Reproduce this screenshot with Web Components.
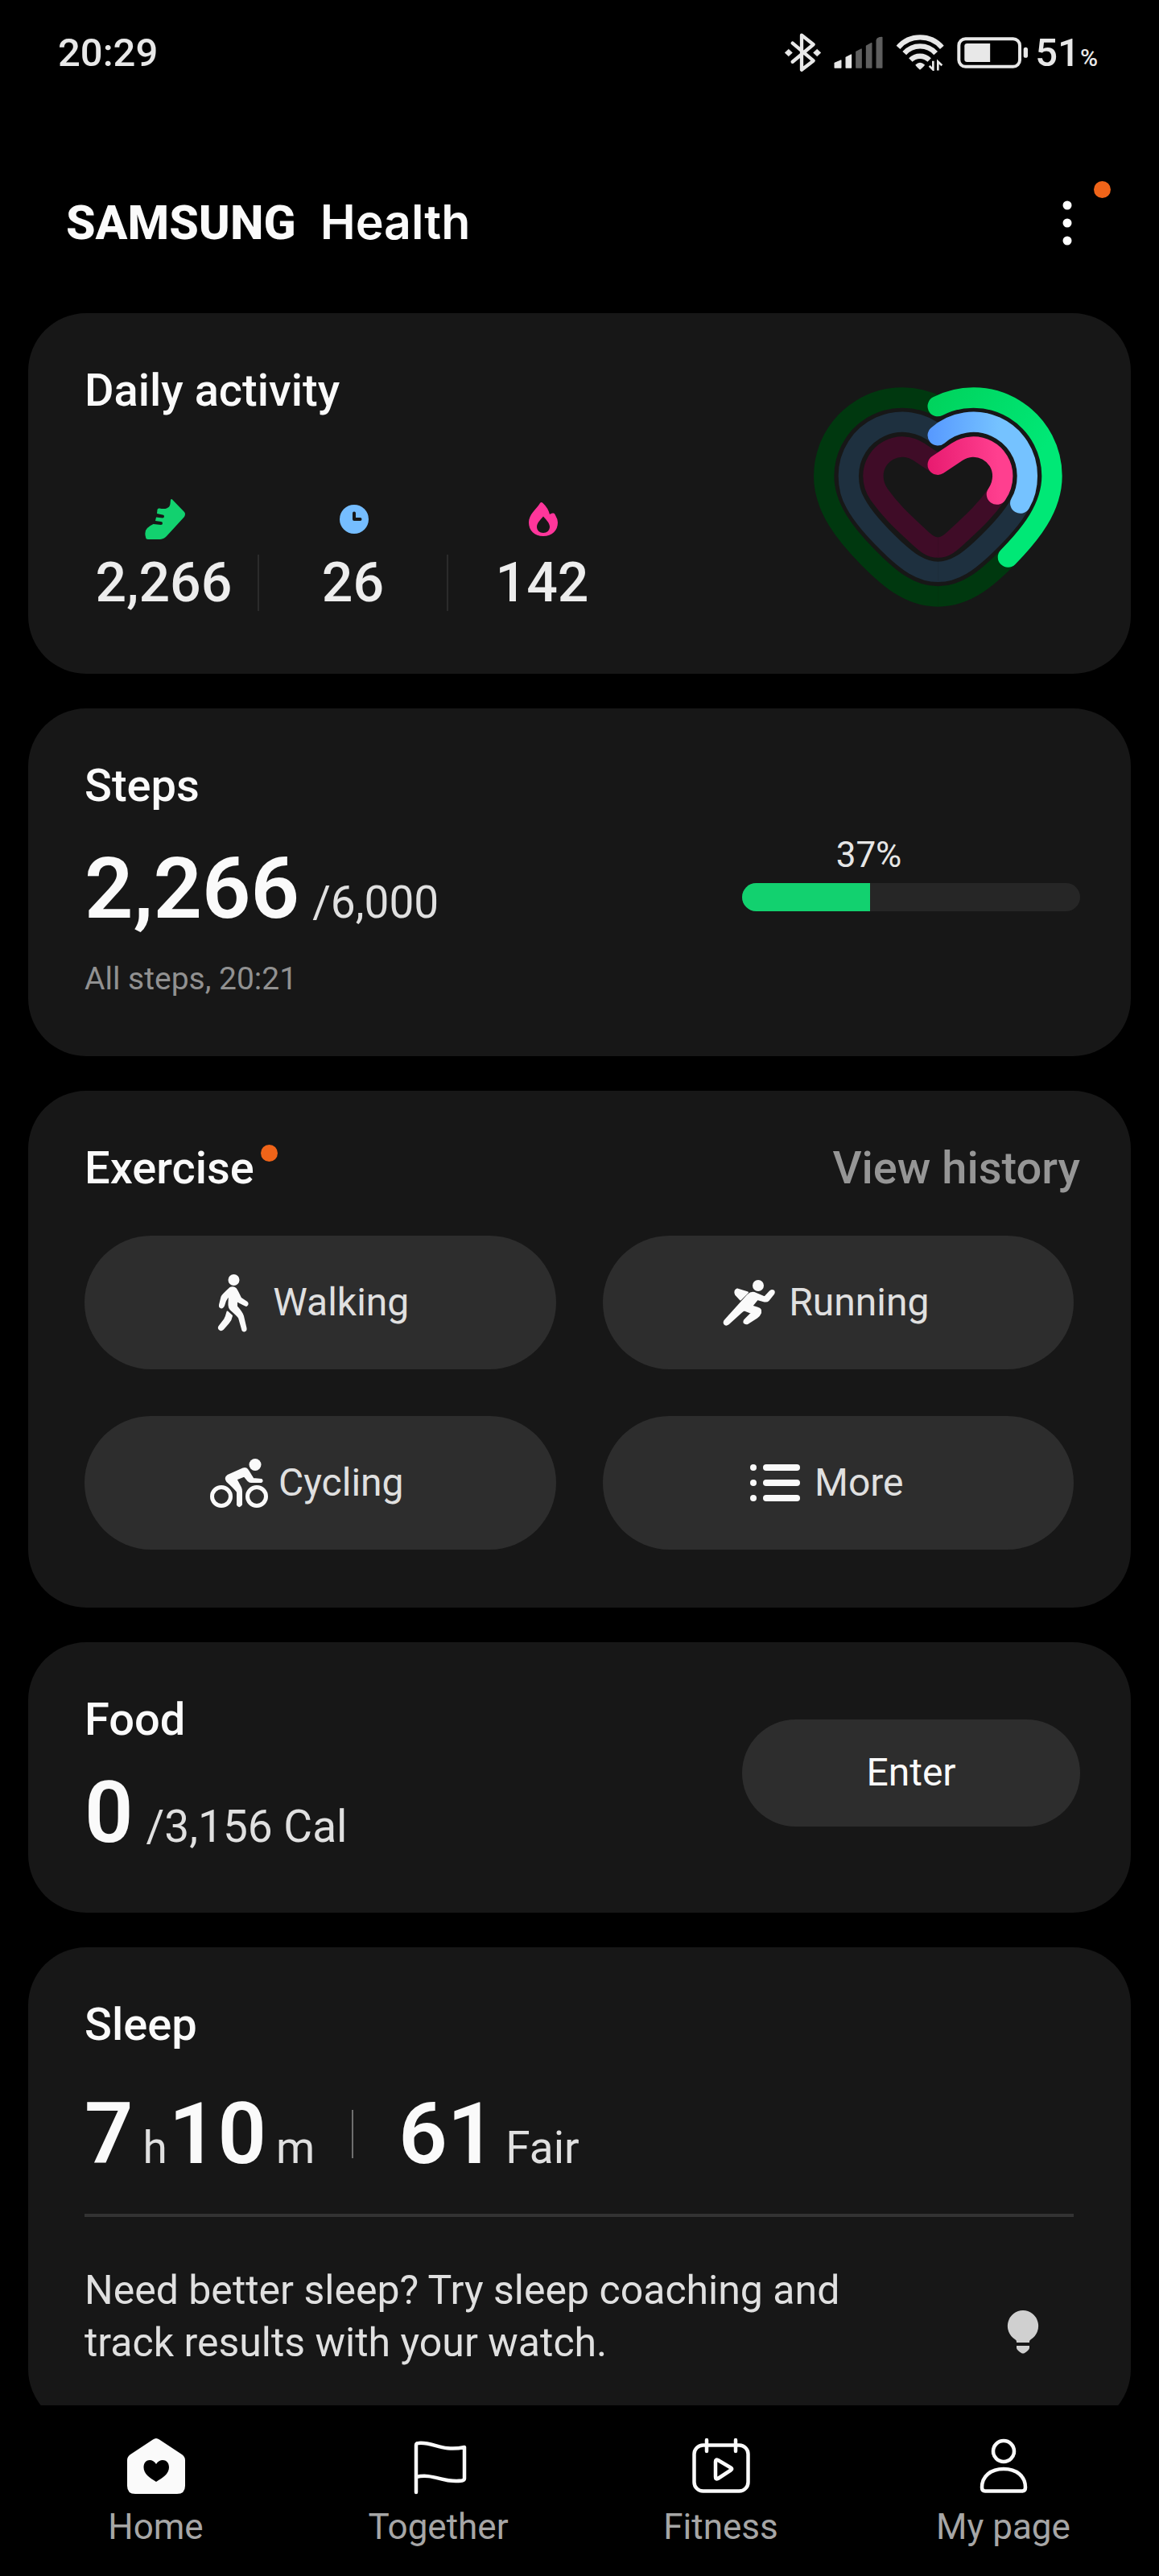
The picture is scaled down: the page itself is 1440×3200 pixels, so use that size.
<!DOCTYPE html>
<html lang="en">
<head>
<meta charset="utf-8">
<meta name="viewport" content="width=device-width, initial-scale=1">
<title>Samsung Health</title>
<style>
  body {
    margin: 0;
    background: #000;
    color: #fafafa;
    font-family: Roboto, "Noto Sans", sans-serif;
  }
</style>
</head>
<body>
<health-app>
  <status-bar slot="top" time="20:29" battery="51"></status-bar>
  <app-header slot="top"></app-header>

  <health-card heading="Daily activity">
    <stat-row>
      <activity-stat icon="shoe" value="2,266"></activity-stat>
      <activity-stat icon="clock" value="26"></activity-stat>
      <activity-stat icon="flame" value="142"></activity-stat>
    </stat-row>
    <heart-rings slot="side"></heart-rings>
  </health-card>

  <health-card heading="Steps">
    <big-reading class="mid" value="2,266" unit="/6,000"></big-reading>
    <sub-note>All steps, 20:21</sub-note>
    <step-progress slot="side" value="37"></step-progress>
  </health-card>

  <health-card heading="Exercise" dot>
    <history-link slot="action">View history</history-link>
    <exercise-grid>
      <exercise-button icon="walk">Walking</exercise-button>
      <exercise-button icon="run">Running</exercise-button>
      <exercise-button icon="cycle">Cycling</exercise-button>
      <exercise-button icon="list">More</exercise-button>
    </exercise-grid>
  </health-card>

  <health-card heading="Food">
    <big-reading class="tight" value="0" unit="/3,156 Cal"></big-reading>
    <enter-button slot="side">Enter</enter-button>
  </health-card>

  <health-card heading="Sleep">
    <sleep-summary></sleep-summary>
    <sleep-tip>Need better sleep? Try sleep coaching and track results with your watch.</sleep-tip>
  </health-card>

  <nav-bar slot="bottom">
    <nav-item icon="home">Home</nav-item>
    <nav-item icon="flag">Together</nav-item>
    <nav-item icon="calendar">Fitness</nav-item>
    <nav-item icon="person">My page</nav-item>
  </nav-bar>
</health-app>

<script>
const ICONS = {
  shoe: `<svg width="50" height="50" viewBox="0 0 50 50" fill="#12d16f" aria-hidden="true">
    <path d="M32 1Q33-1 34.500 1L49 16Q51 18.500 49 22L27 46Q24 49.500 19 50H4Q1 50 1 47Q-1 40 3 36Q6 33 10.500 31L20 32Q22 32 22 30T20 28L13 27L14 22.500L22 23.500Q24 23.500 24 21.500T22 19.500L15 18L15.500 13Q16 11 18 11.500Q24 12.500 27 11.500Q31 10 31.500 6Z"/></svg>`,
  clock: `<svg width="36" height="36" viewBox="0 0 36 36" aria-hidden="true">
    <circle cx="18" cy="18" r="18" fill="#75bdff"/>
    <path d="M18 10.500V18H25.500" fill="none" stroke="#171717" stroke-width="4" stroke-linecap="round" stroke-linejoin="round"/></svg>`,
  flame: `<svg width="36" height="42" viewBox="0 0 36 42" aria-hidden="true">
    <path fill="#ff369b" fill-rule="evenodd" d="M14 1Q15.500-1 17.500 1Q24 7 26 15Q28 13 30.500 13.500Q32 13 33 16Q36 21 36 25C36 35 29 42 18 42S0 35 0 25C0 15 9 9 14 1ZM18 17.500C14 22 10 26 10 30.500C10 35 13.500 38 18 38S26 35 26 30.500C26 26 22 22 18 17.500Z"/></svg>`,
  walk: `<svg width="74" height="74" viewBox="0 0 74 74" fill="#fafafa" stroke="#fafafa" stroke-width="2" stroke-linejoin="round" aria-hidden="true">
    <circle cx="37.500" cy="9" r="6"/>
    <path d="M33 19Q37 17 40 20Q41 21 46 31.500L53.500 36.500Q56 39 53 41Q51.500 41 41 35V42Q48 50 49 54L52.500 69Q53 72 50.500 72.500Q48.500 72.500 48 70L44 56Q43 54 34 46Q31 43 31.500 37L32 28Q28 32 27 35L25 41Q24 43.500 22 43.500Q19.500 43 20 40L22.500 30Q23 28 33 19Z"/>
    <path d="M29.500 48.500L35 53.500Q34 59 31 62L24 70Q22 72 20 70.500Q18 69 19.500 66.500L26 58Q28 55 29.500 48.500Z"/></svg>`,
  run: `<svg width="74" height="74" viewBox="0 0 74 74" fill="#fafafa" stroke="#fafafa" stroke-width="2" stroke-linejoin="round" aria-hidden="true">
    <circle cx="48" cy="16" r="6"/>
    <path d="M35 28Q39 24 43 25L56 30.500L63 23Q65 21.500 67 22.500Q68.500 24 67 26.500L61 34Q59 36 56 35.500L47 33L40 41.500L48 44Q52 45 51 50Q50 53 46 56L35 63Q32 64 30.500 62Q30 59.500 32 58L40 50L31 46.500Q29 47 27 49L11 63.500Q8 66 6 63.500Q5 61 7 59Z"/>
    <path d="M22 20.500L35 24.500L26 33.500L20 27Q18 22 22 20.500Z"/></svg>`,
  cycle: `<svg width="74" height="74" viewBox="0 0 74 74" fill="#fafafa" aria-hidden="true">
    <g fill="none" stroke="#fafafa" stroke-width="5"><circle cx="15" cy="54" r="11.500"/><circle cx="59" cy="54" r="11.500"/></g>
    <circle cx="57" cy="14.500" r="7.500"/>
    <path stroke="#fafafa" stroke-width="2" stroke-linejoin="round" d="M42 19.500Q46 18 48 21.500L54.500 32L65 33Q66.500 35 64.500 36H53Q50 36.500 48.500 34.500L43.500 28.500L33.500 32.500L39 43Q40 45 40 48V64Q37.500 68 35 64.500V49Q35 47 22 35Q19 31 23 28Z"/></svg>`,
  list: `<svg width="74" height="74" viewBox="0 0 74 74" fill="#fafafa" aria-hidden="true">
    <circle cx="10" cy="18" r="4"/><circle cx="10" cy="37" r="4"/><circle cx="10" cy="56" r="4"/>
    <rect x="22" y="14" width="46" height="8" rx="4"/><rect x="22" y="33" width="46" height="8" rx="4"/><rect x="22" y="52" width="46" height="8" rx="4"/></svg>`,
  bulb: `<svg width="40" height="54" viewBox="0 0 40 54" fill="#d0d0d0" aria-hidden="true">
    <path d="M20 0A19.500 19.500 0 0 1 30 36Q28 37 28 39V40H12V39Q12 37 10 36A19.500 19.500 0 0 1 20 0Z"/>
    <path d="M12 44H28V47Q27 50 22 53Q20 54 18 53Q13 50 12 47Z"/></svg>`,
  home: `<svg width="72" height="72" viewBox="0 0 72 72" aria-hidden="true">
    <path fill="#fafafa" fill-rule="evenodd" d="M32 2.500Q36-.500 40 2.500L68 21Q72 24 72 28V60Q72 70 62 70H10Q0 70 0 60V28Q0 24 4 21ZM36 33C31 25 20.500 27 20.500 37C20.500 45 28 50 36 55C44 50 52 45 52 37C52 27 41 25 36 33Z"/></svg>`,
  flag: `<svg width="72" height="72" viewBox="0 0 72 72" fill="none" stroke="#fafafa" stroke-width="4.500" stroke-linecap="round" stroke-linejoin="round" aria-hidden="true">
    <path d="M8 68V9.500Q8 7 11 7C29 5 40 18 68 12V51C68 52 67 53 65 53.500C42 57 30 44 8 49"/></svg>`,
  calendar: `<svg width="72" height="72" viewBox="0 0 72 72" fill="none" stroke="#fafafa" stroke-width="4.500" stroke-linecap="round" stroke-linejoin="round" aria-hidden="true">
    <rect x="2.500" y="9.500" width="67" height="57" rx="11"/>
    <path d="M18 3V17M54 3V17M32 28L48 37.500Q50.500 39 48 40.500L32 51Q29 52.500 29 49V30Q29 26.500 32 28Z"/></svg>`,
  person: `<svg width="72" height="72" viewBox="0 0 72 72" fill="none" stroke="#fafafa" stroke-width="4.500" stroke-linejoin="round" aria-hidden="true">
    <circle cx="36" cy="17" r="13"/>
    <path d="M9 62C9 48 20 39 36 39S63 48 63 62Q63 66.500 59 66.500H13Q9 66.500 9 62Z"/></svg>`
};

// base class: renders a shadow root once the attributes can be read
class HealthElement extends HTMLElement {
  constructor() {
    super();
    this.attachShadow({ mode: "open" });
  }

  connectedCallback() {
    this.shadowRoot.innerHTML = this.render();
  }
}

class HealthApp extends HealthElement {
  render() {
    return `
      <style>
        :host { display: flex; flex-direction: column; height: 100vh; }
        main {
          flex: 1;
          min-height: 0;
          overflow-y: auto;
          scrollbar-width: none;
          display: flex;
          flex-direction: column;
          gap: 43px;
          padding: 0 35px;
        }
      </style>
      <slot name="top"></slot>
      <main><slot></slot></main>
      <slot name="bottom"></slot>`;
  }
}

class StatusBar extends HealthElement {
  render() {
    return `
      <style>
        :host {
          display: flex;
          align-items: center;
          justify-content: space-between;
          height: 130px;
          padding: 0 76px 0 72px;
          color: #e8e8e8;
          font-size: 49px;
          font-weight: 500;
          flex-shrink: 0;
        }
        .icons { display: flex; align-items: center; gap: 16px; }
        .level { margin-left: -8px; }
        small { font-size: 30px; }
      </style>
      <span>${this.getAttribute("time")}</span>
      <div class="icons">
        <svg width="45" height="48" viewBox="105 60 135 145" aria-hidden="true">
          <path d="M134 98L212 164L168 198V68L212 103L134 168" fill="none" stroke="#e8e8e8" stroke-width="13" stroke-linecap="round" stroke-linejoin="round"/>
          <path d="M119 121L133 134L119 147L105 134ZM226 121L240 134L226 147L212 134Z" fill="#e8e8e8" stroke="#e8e8e8" stroke-width="2" stroke-linejoin="round"/>
        </svg>
        <svg width="61" height="40" viewBox="290 76 182 120" stroke-width="4" stroke-linejoin="round" aria-hidden="true">
          <path d="M293 193V176L316 166V193ZM335 193V155L354 145V193Z" fill="#e8e8e8" stroke="#e8e8e8"/>
          <path d="M373 193V134L392 124V193ZM411 193V112L430 102V193ZM449 193V92Q450 80 469 80V193Z" fill="#5f5f5f" stroke="#5f5f5f"/>
        </svg>
        <svg width="60" height="45" viewBox="518 68 180 134" fill="none" stroke="#e8e8e8" stroke-width="19" aria-hidden="true">
          <path d="M527 115A108 108 0 0 1 690 115M550 137A78 78 0 0 1 667 137M573 162A50 50 0 0 1 643 162"/>
          <path d="M591 180Q608 164 626 180Q624 186 608 199Q593 186 591 180Z" fill="#e8e8e8" stroke="none"/>
          <path d="M657 166V198L643 184M675 201V168L690 182" stroke-width="8"/>
        </svg>
        <svg width="89" height="41" viewBox="752 72 268 122" aria-hidden="true">
          <rect x="759" y="81" width="228" height="104" rx="25" fill="none" stroke="#e8e8e8" stroke-width="12"/>
          <path d="M790 98H876V168H790Q780 168 780 158V108Q780 98 790 98Z" fill="#e8e8e8"/>
          <rect x="1001" y="113" width="16" height="39" rx="8" fill="#e8e8e8"/>
        </svg>
        <span class="level">${this.getAttribute("battery")}<small>%</small></span>
      </div>`;
  }
}

class NoticeDot extends HealthElement {
  render() {
    return `
      <style>
        :host { display: block; width: 21px; height: 21px; border-radius: 50%; background: #f06419; }
      </style>`;
  }
}

class AppHeader extends HealthElement {
  render() {
    return `
      <style>
        :host {
          display: flex;
          align-items: center;
          justify-content: space-between;
          padding: 112px 60px 78px 82px;
          flex-shrink: 0;
        }
        h1 {
          display: flex;
          align-items: baseline;
          gap: 30px;
          margin: 0;
          line-height: 68px;
          font-size: 59px;
        }
        .brand { font-weight: 800; }
        .product { font-family: Inter, sans-serif; font-weight: 600; }
        button {
          position: relative;
          display: grid;
          place-items: center;
          width: 108px;
          height: 68px;
          padding: 0;
          border: 0;
          background: none;
        }
        notice-dot { position: absolute; top: -18px; right: 0; }
      </style>
      <h1><span class="brand">SAMSUNG</span><span class="product">Health</span></h1>
      <button aria-label="More options">
        <svg width="12" height="56" viewBox="0 0 12 56" fill="#fff" aria-hidden="true"><circle cx="6" cy="6" r="5.500"/><circle cx="6" cy="28" r="5.500"/><circle cx="6" cy="50" r="5.500"/></svg>
        <notice-dot></notice-dot>
      </button>`;
  }
}

class HealthCard extends HealthElement {
  render() {
    return `
      <style>
        :host {
          display: flex;
          justify-content: space-between;
          flex-shrink: 0;
          padding: 60px 63px 72px 70px;
          border-radius: 72px;
          background: #171717;
        }
        .content { flex: 1; min-width: 0; }
        header { display: flex; justify-content: space-between; }
        h2 { display: flex; gap: 8px; margin: 0; font-size: 56px; line-height: 72px; font-weight: 500; }
        notice-dot { margin-top: 7px; }
      </style>
      <div class="content">
        <header>
          <h2>${this.getAttribute("heading")}${this.hasAttribute("dot") ? "<notice-dot></notice-dot>" : ""}</h2>
          <slot name="action"></slot>
        </header>
        <slot></slot>
      </div>
      <slot name="side"></slot>`;
  }
}

class StatRow extends HealthElement {
  render() {
    return `
      <style>
        :host {
          display: grid;
          grid-template-columns: repeat(3, 235px);
          margin: 94px 0 6px -18px;
        }
      </style>
      <slot></slot>`;
  }
}

class ActivityStat extends HealthElement {
  render() {
    return `
      <style>
        :host { display: grid; gap: 14px; text-align: center; }
        .icon { display: grid; place-items: center; height: 60px; }
        .value {
          border-right: 2px solid #2b2b2b;
          color: #ededed;
          font-size: 68px;
          font-weight: 500;
          line-height: 70px;
        }
        :host(:last-child) .value { border-color: transparent; }
      </style>
      <div class="icon">${ICONS[this.getAttribute("icon")]}</div>
      <div class="value">${this.getAttribute("value")}</div>`;
  }
}

class HeartRings extends HealthElement {
  render() {
    // right half of each ring, mirrored for the left half of its track
    const green = "M555 161A293 293 0 0 1 981 421C981 540 900 640 817 724";
    const greenEnd = "C745 797 665 871 555 871";
    const blue = "M555 270A201 201 0 0 1 889 421C889 460 880 494 863 523";
    const blueEnd = "C830 585 765 650 717 695C670 738 620 779 555 779";
    const pink = "M555 379L627 331A109 109 0 0 1 797 421C797 447 789 470 775 490";
    const pinkEnd = "C725 560 680 598 630 645C605 668 585 688 555 688";
    const track = (d, color) => `<path d="${d}" stroke="${color}"/><path d="${d}" stroke="${color}" transform="matrix(-1 0 0 1 1111 0)"/>`;
    return `
      <style>
        :host { display: block; margin: 32px 22px 0 0; }
        svg { display: block; }
      </style>
      <svg width="309" height="273" viewBox="92 90 928 820" fill="none" stroke-width="76" role="img" aria-label="Daily activity rings">
        <defs>
          <linearGradient id="g" gradientUnits="userSpaceOnUse" x1="520" y1="160" x2="900" y2="400"><stop stop-color="#00d35d"/><stop offset="1" stop-color="#00e876"/></linearGradient>
          <linearGradient id="b" gradientUnits="userSpaceOnUse" x1="520" y1="290" x2="780" y2="300"><stop stop-color="#5799ff"/><stop offset="1" stop-color="#75c2ff"/></linearGradient>
          <linearGradient id="p" gradientUnits="userSpaceOnUse" x1="520" y1="380" x2="780" y2="360"><stop stop-color="#e81b70"/><stop offset="1" stop-color="#ff3f8f"/></linearGradient>
        </defs>
        ${track(green + greenEnd, "#00380f")}
        ${track(blue + blueEnd, "#1e303f")}
        ${track(pink + pinkEnd, "#3f0c27")}
        <g stroke-linecap="round">
          <path d="${green}" stroke="url(#g)"/>
          <path d="${blue}" stroke="url(#b)"/>
          <path d="${pink}" stroke="url(#p)"/>
        </g>
      </svg>`;
  }
}

class BigReading extends HealthElement {
  render() {
    return `
      <style>
        :host {
          display: flex;
          align-items: baseline;
          gap: 16px;
          line-height: 104px;
        }
        :host(.mid) { margin-top: 40px; }
        :host(.tight) { margin-top: 28px; }
        strong { font-size: 106px; font-weight: 600; }
        span { font-size: 55px; line-height: 60px; color: #e0e0e0; }
      </style>
      <strong>${this.getAttribute("value")}</strong>
      <span>${this.getAttribute("unit")}</span>`;
  }
}

class SubNote extends HealthElement {
  render() {
    return `
      <style>
        :host { display: block; margin-top: 36px; font-size: 39px; line-height: 48px; color: #919191; }
      </style>
      <slot></slot>`;
  }
}

class StepProgress extends HealthElement {
  render() {
    return `
      <style>
        :host { display: block; width: 420px; margin-top: 96px; }
        label { display: block; width: 75%; text-align: center; font-size: 44px; line-height: 52px; color: #e6e6e6; }
        progress {
          appearance: none;
          display: block;
          width: 100%;
          height: 35px;
          margin-top: 9px;
          border: 0;
          border-radius: 18px;
          overflow: hidden;
        }
        progress::-webkit-progress-bar { background: #262626; }
        progress::-webkit-progress-value { background: #12d16f; }
      </style>
      <label for="bar">${this.getAttribute("value")}%</label>
      <progress id="bar" max="98" value="${this.getAttribute("value")}"></progress>`;
  }
}

class HistoryLink extends HealthElement {
  render() {
    return `
      <style>
        :host { display: block; font-size: 56px; font-weight: 500; line-height: 72px; }
        a { color: #969696; text-decoration: none; }
      </style>
      <a href="#history"><slot></slot></a>`;
  }
}

class ExerciseGrid extends HealthElement {
  render() {
    return `
      <style>
        :host {
          display: grid;
          grid-template-columns: 1fr 1fr;
          gap: 58px;
          margin: 48px 8px 0 0;
        }
      </style>
      <slot></slot>`;
  }
}

class ExerciseButton extends HealthElement {
  render() {
    return `
      <style>
        :host { display: block; }
        button {
          display: flex;
          align-items: center;
          justify-content: center;
          gap: 12px;
          width: 100%;
          height: 166px;
          padding: 0 34px 0 0;
          border: 0;
          border-radius: 83px;
          background: #2d2d2d;
          color: #e0e0e0;
          font: 48px/60px Roboto, sans-serif;
        }
      </style>
      <button>${ICONS[this.getAttribute("icon")]}<slot></slot></button>`;
  }
}

class EnterButton extends HealthElement {
  render() {
    return `
      <style>
        :host { display: block; width: 420px; align-self: center; }
        button {
          width: 100%;
          height: 133px;
          border: 0;
          border-radius: 67px;
          background: #2d2d2d;
          color: #fafafa;
          font: 48px/60px Roboto, sans-serif;
        }
      </style>
      <button><slot></slot></button>`;
  }
}

class SleepSummary extends HealthElement {
  render() {
    return `
      <style>
        :host {
          display: flex;
          align-items: center;
          margin: 48px 8px 0 0;
          padding-bottom: 47px;
          border-bottom: 4px solid #333;
          line-height: 104px;
        }
        div { display: flex; align-items: baseline; gap: 12px; }
        .time strong + span { margin-right: -10px; }
        strong { font-size: 106px; font-weight: 600; }
        span { font-size: 55px; line-height: 60px; color: #e0e0e0; }
        hr { width: 2px; height: 60px; margin: 0 56px; border: 0; background: #6e6e6e; }
      </style>
      <div class="time"><strong>7</strong><span>h</span><strong>10</strong><span>m</span></div>
      <hr>
      <div><strong>61</strong><span>Fair</span></div>`;
  }
}

class SleepTip extends HealthElement {
  render() {
    return `
      <style>
        :host { display: flex; align-items: center; justify-content: space-between; margin: 59px 51px 0 0; }
        p { max-width: 1000px; margin: 0; font-size: 50px; line-height: 65px; color: #e0e0e0; }
        svg { margin-top: 38px; }
      </style>
      <p><slot></slot></p>
      ${ICONS.bulb}`;
  }
}

class NavBar extends HealthElement {
  render() {
    return `
      <style>
        nav {
          display: grid;
          grid-template-columns: repeat(4, 1fr);
          padding: 40px 18px 32px;
          background: #000;
        }
      </style>
      <nav><slot></slot></nav>`;
  }
}

class NavItem extends HealthElement {
  render() {
    return `
      <style>
        a {
          display: grid;
          justify-items: center;
          gap: 10px;
          color: #a6a6a6;
          font-size: 44px;
          line-height: 58px;
          text-decoration: none;
        }
      </style>
      <a href="#${this.getAttribute("icon")}">${ICONS[this.getAttribute("icon")]}<slot></slot></a>`;
  }
}

customElements.define("health-app", HealthApp);
customElements.define("status-bar", StatusBar);
customElements.define("notice-dot", NoticeDot);
customElements.define("app-header", AppHeader);
customElements.define("health-card", HealthCard);
customElements.define("stat-row", StatRow);
customElements.define("activity-stat", ActivityStat);
customElements.define("heart-rings", HeartRings);
customElements.define("big-reading", BigReading);
customElements.define("sub-note", SubNote);
customElements.define("step-progress", StepProgress);
customElements.define("history-link", HistoryLink);
customElements.define("exercise-grid", ExerciseGrid);
customElements.define("exercise-button", ExerciseButton);
customElements.define("enter-button", EnterButton);
customElements.define("sleep-summary", SleepSummary);
customElements.define("sleep-tip", SleepTip);
customElements.define("nav-bar", NavBar);
customElements.define("nav-item", NavItem);
</script>
</body>
</html>
